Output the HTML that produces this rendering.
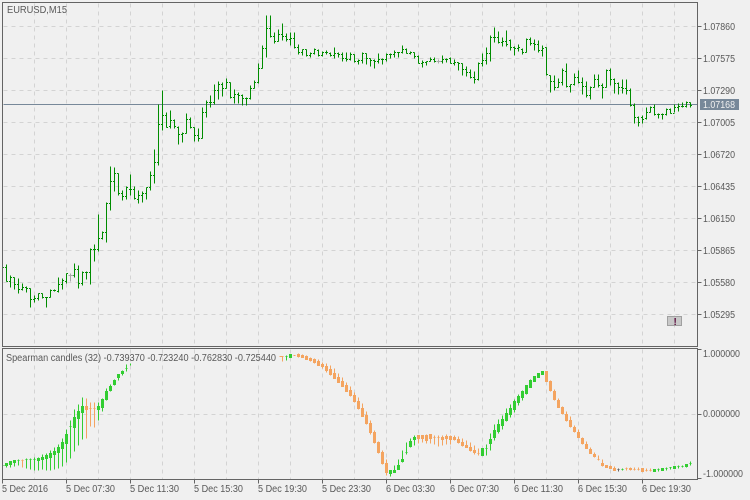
<!DOCTYPE html>
<html><head><meta charset="utf-8"><title>EURUSD,M15</title>
<style>html,body{margin:0;padding:0;background:#f0f0f0;width:750px;height:500px;overflow:hidden}svg{display:block}text{font-family:"Liberation Sans",sans-serif;font-size:10px;fill:#585858}</style></head>
<body>
<svg width="750" height="500" viewBox="0 0 750 500" xmlns="http://www.w3.org/2000/svg">
<defs>
<pattern id="cols" width="4" height="4" patternUnits="userSpaceOnUse"><rect x="1" y="0" width="3" height="4" fill="#fff"/></pattern>
<mask id="tickmask" maskUnits="userSpaceOnUse" x="0" y="0" width="750" height="500"><rect width="750" height="500" fill="url(#cols)"/></mask>
</defs>
<rect width="750" height="500" fill="#f0f0f0"/>
<g transform="translate(.5,.5)" shape-rendering="crispEdges">
<path fill="none" stroke="#d3d3d3" stroke-dasharray="4 4" d="M3 26H697M3 58H697M3 90H697M3 122H697M3 154H697M3 186H697M3 218H697M3 250H697M3 282H697M3 314H697M3 414H697M34 3V346M66 3V346M98 3V346M130 3V346M162 3V346M194 3V346M226 3V346M258 3V346M290 3V346M322 3V346M354 3V346M386 3V346M418 3V346M450 3V346M482 3V346M514 3V346M546 3V346M578 3V346M610 3V346M642 3V346M674 3V346M34 349V479M66 349V479M98 349V479M130 349V479M162 349V479M194 349V479M226 349V479M258 349V479M290 349V479M322 349V479M354 349V479M386 349V479M418 349V479M450 349V479M482 349V479M514 349V479M546 349V479M578 349V479M610 349V479M642 349V479M674 349V479"/>
<path fill="none" stroke="#778899" d="M3 104H697"/>
</g>
<g mask="url(#tickmask)" shape-rendering="crispEdges"><g transform="translate(.5,.5)">
<path fill="none" stroke="#008c00" d="M6 264V281M4 267h2M6 281h2M10 275V287M8 281h2M10 277h2M14 277V289M12 277h2M14 284h2M18 278V293M16 284h2M18 289h2M22 283V290M20 289h2M22 287h2M26 286V292M24 287h2M26 288h2M30 288V307M28 288h2M30 299h2M34 295V302M32 299h2M34 298h2M38 293V300M36 298h2M38 293h2M42 293V298M40 293h2M42 297h2M46 297V307M44 297h2M46 297h2M50 289V297M48 297h2M50 290h2M54 289V291M52 290h2M54 290h2M58 277V292M56 291h2M58 284h2M62 278V289M60 284h2M62 280h2M66 273V283M64 281h2M66 273h2M74 263V277M72 275h2M74 269h2M78 265V288M76 269h2M78 283h2M82 271V285M80 283h2M82 272h2M86 271V279M84 272h2M86 272h2M90 248V284M88 272h2M90 249h2M94 244V261M92 249h2M94 249h2M98 214V251M96 249h2M98 238h2M102 231V239M100 238h2M102 232h2M106 202V242M104 232h2M106 203h2M110 166V210M108 203h2M110 181h2M114 167V191M112 181h2M114 173h2M118 173V195M116 173h2M118 193h2M122 190V200M120 193h2M122 196h2M126 186V199M124 196h2M126 187h2M130 174V195M128 189h2M130 189h2M134 186V199M132 189h2M134 198h2M138 190V203M136 199h2M138 195h2M142 191V202M140 195h2M142 193h2M146 187V199M144 193h2M146 187h2M150 171V190M148 187h2M150 175h2M154 149V183M152 175h2M154 162h2M158 104V165M156 162h2M158 124h2M162 90V130M160 124h2M162 115h2M166 112V127M164 115h2M166 127h2M170 110V128M168 126h2M170 120h2M174 119V128M172 120h2M174 126h2M178 126V144M176 127h2M178 134h2M182 132V142M180 134h2M182 133h2M186 113V133M184 133h2M186 119h2M190 117V128M188 119h2M190 127h2M194 127V141M192 127h2M194 135h2M198 128V141M196 135h2M198 138h2M202 107V138M200 138h2M202 112h2M206 100V117M204 112h2M206 102h2M210 95V107M208 102h2M210 102h2M214 84V104M212 102h2M214 90h2M218 81V99M216 90h2M218 84h2M222 82V96M220 84h2M222 88h2M226 78V88M224 88h2M226 82h2M230 82V98M228 82h2M230 97h2M234 89V103M232 97h2M234 94h2M238 92V103M236 94h2M238 95h2M242 94V105M240 95h2M242 98h2M246 97V105M244 98h2M246 98h2M250 85V99M248 98h2M250 88h2M254 80V88M252 88h2M254 82h2M258 63V83M256 82h2M258 68h2M262 45V68M260 68h2M262 48h2M266 15V57M264 48h2M266 28h2M270 15V37M268 28h2M270 36h2M274 32V43M272 36h2M274 41h2M278 29V41M276 41h2M278 34h2M282 23V40M280 34h2M282 36h2M286 33V41M284 36h2M286 39h2M290 32V45M288 39h2M290 38h2M294 32V48M292 38h2M294 47h2M298 44V54M296 47h2M298 52h2M302 49V55M300 52h2M302 49h2M306 49V56M304 49h2M306 55h2M310 52V57M308 55h2M310 53h2M314 48V54M312 53h2M314 49h2M318 49V56M316 50h2M318 55h2M322 51V56M320 55h2M322 52h2M326 50V54M324 52h2M326 52h2M330 52V56M328 53h2M330 55h2M334 47V58M332 55h2M334 53h2M338 52V57M336 53h2M338 54h2M342 52V61M340 54h2M342 58h2M346 52V61M344 58h2M346 59h2M350 52V60M348 59h2M350 54h2M354 54V62M352 54h2M354 61h2M358 59V64M356 61h2M358 60h2M362 52V63M360 60h2M362 53h2M366 53V64M364 53h2M366 58h2M370 58V66M368 58h2M370 60h2M374 59V68M372 60h2M374 61h2M378 53V63M376 61h2M378 59h2M382 58V64M380 59h2M382 59h2M386 53V61M384 59h2M386 54h2M390 53V58M388 54h2M390 54h2M394 50V57M392 54h2M394 52h2M398 52V57M396 52h2M398 52h2M402 45V53M400 52h2M402 49h2M406 48V53M404 49h2M406 53h2M410 51V54M408 53h2M410 52h2M414 52V58M412 52h2M414 56h2M418 55V63M416 56h2M418 63h2M422 60V67M420 63h2M422 62h2M426 61V65M424 62h2M426 61h2M430 57V61M428 61h2M430 59h2M434 57V62M432 59h2M434 61h2M442 55V63M440 61h2M442 59h2M446 58V62M444 59h2M446 59h2M450 57V63M448 58h2M450 63h2M454 59V65M452 63h2M454 62h2M458 62V70M456 62h2M458 63h2M462 63V75M460 63h2M462 69h2M466 66V76M464 69h2M466 72h2M470 69V78M468 72h2M470 77h2M474 71V83M472 77h2M474 79h2M478 62V80M476 79h2M478 63h2M482 53V66M480 63h2M482 60h2M486 47V64M484 60h2M486 53h2M490 35V61M488 53h2M490 37h2M494 27V42M492 37h2M494 37h2M498 31V43M496 37h2M498 42h2M502 37V46M500 42h2M502 41h2M506 30V46M504 41h2M506 44h2M510 39V50M508 40h2M510 47h2M514 46V55M512 47h2M514 48h2M518 44V51M516 48h2M518 47h2M522 48V54M520 49h2M522 52h2M526 38V52M524 52h2M526 39h2M530 37V45M528 39h2M530 43h2M534 39V50M532 43h2M534 44h2M538 40V52M536 44h2M538 50h2M542 45V56M540 50h2M542 48h2M546 47V75M544 47h2M546 74h2M550 75V92M548 75h2M550 81h2M554 75V90M552 81h2M554 87h2M558 78V87M556 87h2M558 82h2M562 68V85M560 82h2M562 70h2M566 63V87M564 71h2M566 86h2M570 84V92M568 86h2M570 84h2M574 73V85M572 84h2M574 77h2M578 70V83M576 77h2M578 82h2M582 77V94M580 82h2M582 86h2M586 81V97M584 86h2M586 95h2M590 86V99M588 95h2M590 87h2M594 74V87M592 87h2M594 79h2M598 74V87M596 79h2M598 85h2M602 83V98M600 85h2M602 87h2M606 69V87M604 87h2M606 70h2M610 68V85M608 70h2M610 79h2M614 78V93M612 79h2M614 83h2M618 82V94M616 83h2M618 87h2M622 79V93M620 87h2M622 88h2M626 79V94M624 88h2M626 90h2M630 88V106M628 90h2M630 105h2M634 103V123M632 105h2M634 117h2M638 116V126M636 117h2M638 122h2M642 115V123M640 117h2M642 119h2M646 107V119M644 118h2M646 112h2M650 106V112M648 112h2M650 107h2M654 104V115M652 107h2M654 114h2M658 113V118M656 114h2M658 114h2M662 113V119M660 114h2M662 114h2M666 108V115M664 114h2M666 109h2M670 108V113M668 109h2M670 113h2M674 104V112M672 113h2M674 107h2M678 103V111M676 107h2M678 106h2M682 102V107M680 106h2M682 106h2M686 101V107M684 106h2M686 102h2M690 102V107M688 102h2M690 105h2"/>
</g></g>
<rect x="3" y="267" width="1" height="1" fill="#008c00"/>
<g transform="translate(.5,.5)" shape-rendering="crispEdges">
<path fill="none" stroke="#a9a9a9" d="M70 273V281M68 275h5M438 59V63M436 61h5"/>
<path fill="#32cd32" stroke="#32cd32" d="M3 465h1M6 463V467M5 463h2v2h-2zM10 461V467M9 461h2v3h-2zM14 460V466M13 460h2v2h-2zM18 459V465M17 460h2M26 458V468M25 459h2M30 458V469M29 459h2M34 457V470M33 459h2M38 457V470M37 458h2v2h-2zM42 454V469M41 457h2v2h-2zM46 453V470M45 455h2v3h-2zM50 450V470M49 453h2v4h-2zM54 447V469M53 451h2v3h-2zM58 444V468M57 447h2v5h-2zM62 438V466M61 442h2v6h-2zM66 429V462M65 434h2v9h-2zM70 420V458M69 426h2M74 409V451M73 417h2v10h-2zM78 404V445M77 411h2v7h-2zM82 397V439M81 406h2v6h-2zM98 402V420M97 406h2v3h-2zM102 398V411M101 399h2v8h-2zM106 388V400M105 391h2v8h-2zM110 384V391M109 386h2v4h-2zM114 379V385M113 380h2v4h-2zM118 374V380M117 374h2v3h-2zM122 370V375M121 371h2v2h-2zM126 364V371M125 368h2M130 363V365M286 355V360M285 356h2M290 354V357M289 354h2v3h-2zM390 470V476M389 470h2v3h-2zM394 465V472M393 470h2v2h-2zM398 459V469M397 465h2v4h-2zM402 450V462M401 459h2v2h-2zM406 442V454M405 452h2M410 438V447M409 441h2v5h-2zM414 435V445M413 437h2v2h-2zM482 448V455M481 448h2v7h-2zM486 444V455M485 448h2M490 433V450M489 439h2v4h-2zM494 424V440M493 430h2v7h-2zM498 419V433M497 424h2v7h-2zM502 415V429M501 419h2v6h-2zM506 408V421M505 413h2v7h-2zM510 404V417M509 408h2v6h-2zM514 399V412M513 401h2v8h-2zM518 394V405M517 396h2v6h-2zM522 390V400M521 391h2v6h-2zM526 385V394M525 385h2v8h-2zM530 379V387M529 380h2v7h-2zM533 376h2v5h-2zM537 373h2v4h-2zM541 371h2v3h-2zM622 468V470M621 469h2M653 469h2v2h-2zM658 468V471M657 469h2M661 468h2v2h-2zM666 467V470M665 468h2M670 467V469M669 467h2M673 466h2v2h-2zM678 465V468M677 466h2M682 465V467M681 466h2M686 464V467M685 464h2v2h-2zM690 461V465M689 463h2"/>
<path fill="#f4a460" stroke="#f4a460" d="M22 459V467M21 460h2M86 398V438M85 406h2v3h-2zM90 402V426M89 408h2M94 402V427M93 408h2M279 356h2M282 356V361M281 356h2M293 355h2M298 353V357M297 354h2v2h-2zM302 354V357M301 355h2v2h-2zM306 355V359M305 356h2v3h-2zM310 357V361M309 358h2v2h-2zM314 358V363M313 359h2v3h-2zM318 359V365M317 361h2v4h-2zM322 362V368M321 364h2v2h-2zM326 363V372M325 366h2v4h-2zM330 365V375M329 369h2v5h-2zM334 368V378M333 373h2v5h-2zM338 373V382M337 377h2v5h-2zM342 377V386M341 381h2v5h-2zM346 382V391M345 385h2v6h-2zM350 386V396M349 390h2v5h-2zM354 392V402M353 395h2v6h-2zM358 397V409M357 401h2v7h-2zM362 403V416M361 408h2v8h-2zM366 411V424M365 415h2v8h-2zM370 420V434M369 423h2v9h-2zM374 430V443M373 432h2v10h-2zM378 441V453M377 442h2v10h-2zM382 450V464M381 452h2v11h-2zM386 459V475M385 463h2v9h-2zM418 435V443M417 435h2v3h-2zM422 435V442M421 435h2v3h-2zM426 434V443M425 435h2v5h-2zM430 434V443M429 434h2v4h-2zM434 435V444M433 437h2M438 435V446M437 437h2M442 435V445M441 437h2v2h-2zM446 434V444M445 436h2v2h-2zM450 435V444M449 436h2v3h-2zM454 435V440M453 437h2v2h-2zM458 436V443M457 439h2v3h-2zM462 438V446M461 442h2v3h-2zM466 440V447M465 445h2v2h-2zM470 442V451M469 447h2v3h-2zM474 445V454M473 450h2v2h-2zM478 448V455M477 453h2M545 371h2v10h-2zM550 380V391M549 381h2v9h-2zM554 389V400M553 391h2v8h-2zM558 398V407M557 400h2v7h-2zM562 406V414M561 407h2v6h-2zM566 411V421M565 414h2v6h-2zM570 416V427M569 420h2v6h-2zM574 425V432M573 427h2v4h-2zM578 429V437M577 432h2v5h-2zM582 437V444M581 438h2v5h-2zM586 441V448M585 444h2v4h-2zM590 447V453M589 449h2v4h-2zM594 452V457M593 454h2v2h-2zM598 455V460M597 459h2M602 459V466M601 463h2v2h-2zM605 465h2v2h-2zM610 465V468M609 466h2v2h-2zM614 466V470M613 468h2v2h-2zM626 467V470M625 468h2M630 467V470M629 468h2v1h-2zM634 467V470M633 469h2M638 467V470M637 469h2M641 468h2v3h-2zM646 468V471M645 470h2M650 468V471M649 470h2"/>
<path fill="none" stroke="#646464" d="M618 468V471M617 469h2"/>
<path fill="none" stroke="#646464" d="M2 2H697V346H2zM2 348H697V479H2zM697 26h4M697 58h4M697 90h4M697 122h4M697 154h4M697 186h4M697 218h4M697 250h4M697 282h4M697 314h4M697 349h4M697 414h4M697 478h4M2 479v4M66 479v4M130 479v4M194 479v4M258 479v4M322 479v4M386 479v4M450 479v4M514 479v4M578 479v4M642 479v4"/>
<rect x="667" y="316" width="14" height="9" fill="#c8c8c8" stroke="#a0a0a0"/>
</g>
<rect x="700" y="99" width="39" height="11" fill="#778899"/>
<text x="673.5" y="325" font-weight="bold" style="fill:#5a0a3c">!</text>
<text x="7" y="13" textLength="60" lengthAdjust="spacingAndGlyphs">EURUSD,M15</text>
<text x="6" y="361" textLength="270" lengthAdjust="spacingAndGlyphs">Spearman candles (32) -0.739370 -0.723240 -0.762830 -0.725440</text>
<text x="703" y="30" textLength="32" lengthAdjust="spacingAndGlyphs">1.07860</text>
<text x="703" y="62" textLength="32" lengthAdjust="spacingAndGlyphs">1.07575</text>
<text x="703" y="94" textLength="32" lengthAdjust="spacingAndGlyphs">1.07290</text>
<text x="703" y="108" textLength="32" lengthAdjust="spacingAndGlyphs" style="fill:#f0f0f0">1.07168</text>
<text x="703" y="126" textLength="32" lengthAdjust="spacingAndGlyphs">1.07005</text>
<text x="703" y="158" textLength="32" lengthAdjust="spacingAndGlyphs">1.06720</text>
<text x="703" y="190" textLength="32" lengthAdjust="spacingAndGlyphs">1.06435</text>
<text x="703" y="222" textLength="32" lengthAdjust="spacingAndGlyphs">1.06150</text>
<text x="703" y="254" textLength="32" lengthAdjust="spacingAndGlyphs">1.05865</text>
<text x="703" y="286" textLength="32" lengthAdjust="spacingAndGlyphs">1.05580</text>
<text x="703" y="318" textLength="32" lengthAdjust="spacingAndGlyphs">1.05295</text>
<text x="703" y="357" textLength="37" lengthAdjust="spacingAndGlyphs">1.000000</text>
<text x="703" y="417" textLength="37" lengthAdjust="spacingAndGlyphs">0.000000</text>
<text x="703" y="477" textLength="40" lengthAdjust="spacingAndGlyphs">-1.000000</text>
<text x="2" y="492" textLength="46" lengthAdjust="spacingAndGlyphs">5 Dec 2016</text>
<text x="66" y="492" textLength="49" lengthAdjust="spacingAndGlyphs">5 Dec 07:30</text>
<text x="130" y="492" textLength="49" lengthAdjust="spacingAndGlyphs">5 Dec 11:30</text>
<text x="194" y="492" textLength="49" lengthAdjust="spacingAndGlyphs">5 Dec 15:30</text>
<text x="258" y="492" textLength="49" lengthAdjust="spacingAndGlyphs">5 Dec 19:30</text>
<text x="322" y="492" textLength="49" lengthAdjust="spacingAndGlyphs">5 Dec 23:30</text>
<text x="386" y="492" textLength="49" lengthAdjust="spacingAndGlyphs">6 Dec 03:30</text>
<text x="450" y="492" textLength="49" lengthAdjust="spacingAndGlyphs">6 Dec 07:30</text>
<text x="514" y="492" textLength="49" lengthAdjust="spacingAndGlyphs">6 Dec 11:30</text>
<text x="578" y="492" textLength="49" lengthAdjust="spacingAndGlyphs">6 Dec 15:30</text>
<text x="642" y="492" textLength="49" lengthAdjust="spacingAndGlyphs">6 Dec 19:30</text>
</svg>
</body></html>
